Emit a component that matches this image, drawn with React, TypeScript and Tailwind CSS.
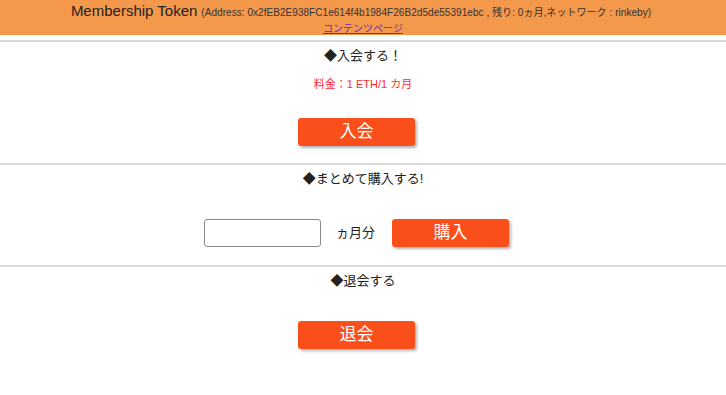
export default function App() {
    return (
        <div className="min-h-[395px] bg-white text-[#222] [font-family:'Liberation_Sans','Noto_Sans_CJK_JP',sans-serif]">
            {/* Header */}
            <header className="bg-[#f4984c] h-[35px] text-center leading-none pt-[3px]">
                <div className="flex items-baseline justify-center gap-1 mr-[4px]">
                    <span className="text-[15px] text-[#222]">Membership Token</span>
                    <span className="text-[10px] text-[#333] tracking-[0.05px]">
                        (Address: 0x2fEB2E938FC1e614f4b1984F26B2d5de55391ebc , 残り: 0ヵ月,ネットワーク : rinkeby)
                    </span>
                </div>
                <a href="#" className="inline-block mt-[6px] text-[10px] text-[#6b2fa8] underline">
                    コンテンツページ
                </a>
            </header>

            <hr className="mt-[5px] border-t-2 border-[#d9d9d9]" />

            {/* 入会 */}
            <section className="flex flex-col items-center pt-[5px]">
                <p className="text-[13px] leading-[18px]">◆入会する！</p>
                <p className="mt-[12px] text-[11px] leading-[14px] text-[#ff2a2a]">料金：1 ETH/1 カ月</p>
                <button className="mt-[27px] mr-[13px] w-[117px] h-[28px] rounded-[3px] bg-[#fa4f1b] text-white text-[17px] shadow-[2px_2px_3px_rgba(0,0,0,0.3)]">
                    入会
                </button>
            </section>

            <hr className="mt-[17px] border-t-2 border-[#d9d9d9]" />

            {/* まとめて購入 */}
            <section className="flex flex-col items-center pt-[5px]">
                <p className="text-[13px] leading-[18px]">◆まとめて購入する!</p>
                <div className="mt-[31px] mr-[13px] flex items-center">
                    <input
                        type="text"
                        className="w-[117px] h-[28px] rounded-[3px] border border-[#8a8a8a] bg-white"
                    />
                    <span className="ml-[15px] text-[13px]">ヵ月分</span>
                    <button className="ml-[17px] w-[117px] h-[28px] rounded-[3px] bg-[#fa4f1b] text-white text-[17px] shadow-[2px_2px_3px_rgba(0,0,0,0.3)]">
                        購入
                    </button>
                </div>
            </section>

            <hr className="mt-[18px] border-t-2 border-[#d9d9d9]" />

            {/* 退会 */}
            <section className="flex flex-col items-center pt-[5px]">
                <p className="text-[13px] leading-[18px]">◆退会する</p>
                <button className="mt-[31px] mr-[13px] w-[117px] h-[28px] rounded-[3px] bg-[#fa4f1b] text-white text-[17px] shadow-[2px_2px_3px_rgba(0,0,0,0.3)]">
                    退会
                </button>
            </section>
        </div>
    );
}
